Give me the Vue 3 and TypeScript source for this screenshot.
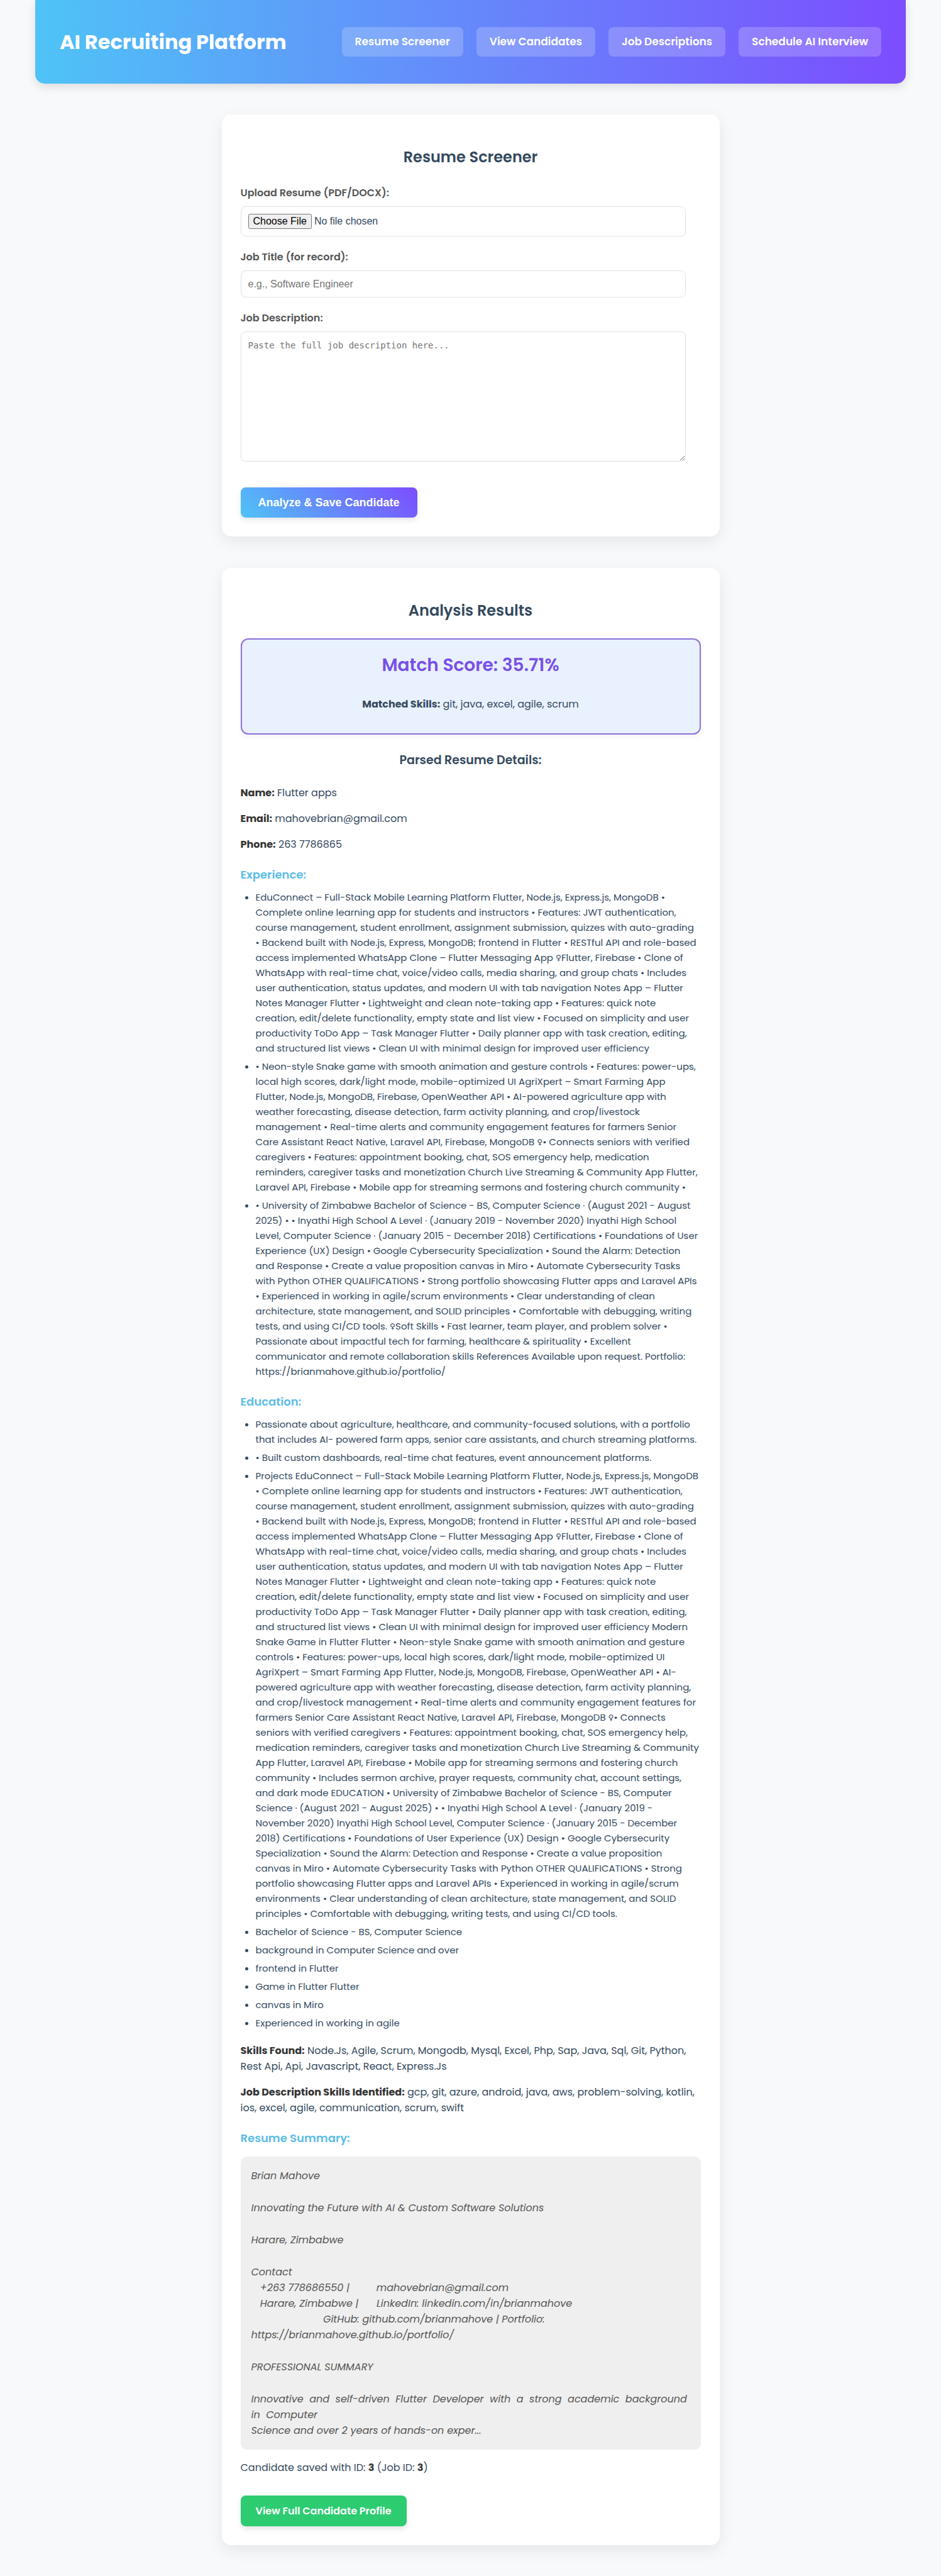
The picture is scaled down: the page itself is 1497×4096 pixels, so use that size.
<script setup lang="ts">
import { ref } from 'vue'

interface NavLink {
  label: string
  href: string
}

const navLinks: NavLink[] = [
  { label: 'Resume Screener', href: '#screener' },
  { label: 'View Candidates', href: '#candidates' },
  { label: 'Job Descriptions', href: '#jobs' },
  { label: 'Schedule AI Interview', href: '#interview' },
]

const jobTitle = ref('')
const jobDescription = ref('')

const contact = [
  { label: 'Name:', value: 'Flutter apps' },
  { label: 'Email:', value: 'mahovebrian@gmail.com' },
  { label: 'Phone:', value: '263 7786865' },
]

const experience: string[] = [
  `EduConnect – Full-Stack Mobile Learning Platform Flutter, Node.js, Express.js, MongoDB •
Complete online learning app for students and instructors • Features: JWT authentication,
course management, student enrollment, assignment submission, quizzes with auto-grading
• Backend built with Node.js, Express, MongoDB; frontend in Flutter • RESTful API and role-based
access implemented WhatsApp Clone – Flutter Messaging App ♀Flutter, Firebase • Clone of
WhatsApp with real-time chat, voice/video calls, media sharing, and group chats • Includes
user authentication, status updates, and modern UI with tab navigation Notes App – Flutter
Notes Manager Flutter • Lightweight and clean note-taking app • Features: quick note
creation, edit/delete functionality, empty state and list view • Focused on simplicity and user
productivity ToDo App – Task Manager Flutter • Daily planner app with task creation, editing,
and structured list views • Clean UI with minimal design for improved user efficiency`,
  `• Neon-style Snake game with smooth animation and gesture controls • Features: power-ups,
local high scores, dark/light mode, mobile-optimized UI AgriXpert – Smart Farming App
Flutter, Node.js, MongoDB, Firebase, OpenWeather API • AI-powered agriculture app with
weather forecasting, disease detection, farm activity planning, and crop/livestock
management • Real-time alerts and community engagement features for farmers Senior
Care Assistant React Native, Laravel API, Firebase, MongoDB ♀• Connects seniors with verified
caregivers • Features: appointment booking, chat, SOS emergency help, medication
reminders, caregiver tasks and monetization Church Live Streaming & Community App Flutter,
Laravel API, Firebase • Mobile app for streaming sermons and fostering church community •`,
  `• University of Zimbabwe Bachelor of Science - BS, Computer Science · (August 2021 - August
2025) • • Inyathi High School A Level · (January 2019 - November 2020) Inyathi High School
Level, Computer Science · (January 2015 - December 2018) Certifications • Foundations of User
Experience (UX) Design • Google Cybersecurity Specialization • Sound the Alarm: Detection
and Response • Create a value proposition canvas in Miro • Automate Cybersecurity Tasks
with Python OTHER QUALIFICATIONS • Strong portfolio showcasing Flutter apps and Laravel APIs
• Experienced in working in agile/scrum environments • Clear understanding of clean
architecture, state management, and SOLID principles • Comfortable with debugging, writing
tests, and using CI/CD tools. ♀Soft Skills • Fast learner, team player, and problem solver •
Passionate about impactful tech for farming, healthcare & spirituality • Excellent
communicator and remote collaboration skills References Available upon request. Portfolio:
https://brianmahove.github.io/portfolio/`,
]

const education: string[] = [
  `Passionate about agriculture, healthcare, and community-focused solutions, with a portfolio
that includes AI- powered farm apps, senior care assistants, and church streaming platforms.`,
  `• Built custom dashboards, real-time chat features, event announcement platforms.`,
  `Projects EduConnect – Full-Stack Mobile Learning Platform Flutter, Node.js, Express.js, MongoDB
• Complete online learning app for students and instructors • Features: JWT authentication,
course management, student enrollment, assignment submission, quizzes with auto-grading
• Backend built with Node.js, Express, MongoDB; frontend in Flutter • RESTful API and role-based
access implemented WhatsApp Clone – Flutter Messaging App ♀Flutter, Firebase • Clone of
WhatsApp with real-time chat, voice/video calls, media sharing, and group chats • Includes
user authentication, status updates, and modern UI with tab navigation Notes App – Flutter
Notes Manager Flutter • Lightweight and clean note-taking app • Features: quick note
creation, edit/delete functionality, empty state and list view • Focused on simplicity and user
productivity ToDo App – Task Manager Flutter • Daily planner app with task creation, editing,
and structured list views • Clean UI with minimal design for improved user efficiency Modern
Snake Game in Flutter Flutter • Neon-style Snake game with smooth animation and gesture
controls • Features: power-ups, local high scores, dark/light mode, mobile-optimized UI
AgriXpert – Smart Farming App Flutter, Node.js, MongoDB, Firebase, OpenWeather API • AI-
powered agriculture app with weather forecasting, disease detection, farm activity planning,
and crop/livestock management • Real-time alerts and community engagement features for
farmers Senior Care Assistant React Native, Laravel API, Firebase, MongoDB ♀• Connects
seniors with verified caregivers • Features: appointment booking, chat, SOS emergency help,
medication reminders, caregiver tasks and monetization Church Live Streaming & Community
App Flutter, Laravel API, Firebase • Mobile app for streaming sermons and fostering church
community • Includes sermon archive, prayer requests, community chat, account settings,
and dark mode EDUCATION • University of Zimbabwe Bachelor of Science - BS, Computer
Science · (August 2021 - August 2025) • • Inyathi High School A Level · (January 2019 -
November 2020) Inyathi High School Level, Computer Science · (January 2015 - December
2018) Certifications • Foundations of User Experience (UX) Design • Google Cybersecurity
Specialization • Sound the Alarm: Detection and Response • Create a value proposition
canvas in Miro • Automate Cybersecurity Tasks with Python OTHER QUALIFICATIONS • Strong
portfolio showcasing Flutter apps and Laravel APIs • Experienced in working in agile/scrum
environments • Clear understanding of clean architecture, state management, and SOLID
principles • Comfortable with debugging, writing tests, and using CI/CD tools.`,
  'Bachelor of Science - BS, Computer Science',
  'background in Computer Science and over',
  'frontend in Flutter',
  'Game in Flutter Flutter',
  'canvas in Miro',
  'Experienced in working in agile',
]

const summary: string[] = [
  'Brian Mahove',
  'Innovating the Future with AI & Custom Software Solutions',
  'Harare, Zimbabwe',
  `Contact
   +263 778686550 |         mahovebrian@gmail.com
   Harare, Zimbabwe |      LinkedIn: linkedin.com/in/brianmahove
                        GitHub: github.com/brianmahove | Portfolio:
https://brianmahove.github.io/portfolio/`,
  'PROFESSIONAL SUMMARY',
  `Innovative  and  self-driven  Flutter  Developer  with  a  strong  academic  background
in  Computer
Science and over 2 years of hands-on exper...`,
]
</script>

<template>
  <div class="page">
    <header class="site-header">
      <h1>AI Recruiting Platform</h1>
      <nav>
        <a v-for="link in navLinks" :key="link.href" :href="link.href">{{ link.label }}</a>
      </nav>
    </header>

    <main>
      <section id="screener" class="card">
        <h2>Resume Screener</h2>
        <form @submit.prevent>
          <div class="field">
            <label for="resume">Upload Resume (PDF/DOCX):</label>
            <input id="resume" class="file" type="file" accept=".pdf,.docx" />
          </div>
          <div class="field">
            <label for="job-title">Job Title (for record):</label>
            <input id="job-title" v-model="jobTitle" class="text" type="text" placeholder="e.g., Software Engineer" />
          </div>
          <div class="field">
            <label for="job-description">Job Description:</label>
            <textarea id="job-description" v-model="jobDescription" placeholder="Paste the full job description here..."></textarea>
          </div>
          <button type="submit" class="analyze">Analyze &amp; Save Candidate</button>
        </form>
      </section>

      <section class="card">
        <h2>Analysis Results</h2>
        <div class="score">
          <h3>Match Score: 35.71%</h3>
          <p><strong>Matched Skills:</strong> git, java, excel, agile, scrum</p>
        </div>

        <h3 class="details-title">Parsed Resume Details:</h3>
        <p v-for="row in contact" :key="row.label"><strong>{{ row.label }}</strong> {{ row.value }}</p>

        <h4>Experience:</h4>
        <ul>
          <li v-for="(item, i) in experience" :key="i">{{ item }}</li>
        </ul>

        <h4>Education:</h4>
        <ul>
          <li v-for="(item, i) in education" :key="i">{{ item }}</li>
        </ul>

        <p><strong>Skills Found:</strong> Node.Js, Agile, Scrum, Mongodb, Mysql, Excel, Php, Sap, Java, Sql, Git, Python,<br />Rest Api, Api, Javascript, React, Express.Js</p>
        <p><strong>Job Description Skills Identified:</strong> gcp, git, azure, android, java, aws, problem-solving, kotlin,<br />ios, excel, agile, communication, scrum, swift</p>

        <h4>Resume Summary:</h4>
        <div class="summary">
          <p v-for="(block, i) in summary" :key="i">{{ block }}</p>
        </div>

        <p>Candidate saved with ID: <strong>3</strong> (Job ID: <strong>3</strong>)</p>
        <a class="profile" href="#profile">View Full Candidate Profile</a>
      </section>
    </main>
  </div>
</template>

<style>
body {
  margin: 0;
  background: #f8f9fb;
}
</style>

<style scoped>
.page {
  font-family: Poppins, Inter, "DejaVu Sans", sans-serif;
  font-size: 16px;
  line-height: 25px;
  color: #34495e;
}

.site-header {
  box-sizing: border-box;
  width: calc(100% - 48px);
  max-width: 1385px;
  min-height: 133px;
  margin: 0 auto 49px;
  padding: 0 39px;
  display: flex;
  align-items: center;
  justify-content: space-between;
  color: #fff;
  background: linear-gradient(90deg, #4fc3f7, #7c4dff);
  border-radius: 0 0 15px 15px;
  box-shadow: 0 5px 15px rgba(0, 0, 0, 0.12);
}

h1 {
  margin: 0;
  font-size: 32px;
  line-height: 46px;
  font-weight: 700;
}

nav {
  display: flex;
  gap: 21px;
}

nav a {
  padding: 11px 21px;
  font-size: 17px;
  font-weight: 600;
  color: #fff;
  text-decoration: none;
  background: rgba(255, 255, 255, 0.2);
  border-radius: 8px;
}

main {
  max-width: 792px;
  margin: 0 auto;
  padding-bottom: 49px;
}

.card {
  padding: 30px;
  background: #fff;
  border-radius: 15px;
  box-shadow: 0 8px 25px rgba(0, 0, 0, 0.08);
  display: flow-root;
}

.card + .card {
  margin-top: 50px;
}

h2 {
  margin: 19px 0 25px;
  font-size: 24px;
  line-height: 38px;
  font-weight: 600;
  text-align: center;
}

.field {
  width: 708px;
  max-width: 100%;
  margin-bottom: 20px;
}

label {
  display: block;
  margin-bottom: 8px;
  line-height: 26px;
  font-size: 16px;
  font-weight: 600;
  color: #555;
}

input,
textarea {
  display: block;
  box-sizing: border-box;
  width: 100%;
  margin: 0;
  padding: 11px;
  border: 1px solid #dde1e4;
  border-radius: 8px;
  background: #fff;
  color: #34495e;
  font-family: "Liberation Sans", Arial, sans-serif;
  font-size: 16px;
}

.file {
  height: 48px;
}

.text {
  height: 43px;
}

textarea {
  height: 207px;
  font-family: "DejaVu Sans Mono", monospace;
  font-size: 14px;
  line-height: 20px;
  resize: vertical;
}

input::placeholder,
textarea::placeholder {
  color: #757575;
}

.analyze {
  height: 48px;
  margin-top: 21px;
  padding: 0 28px;
  border: 0;
  border-radius: 8px;
  font-family: "Liberation Sans", Arial, sans-serif;
  font-size: 18px;
  font-weight: 700;
  color: #fff;
  background: linear-gradient(45deg, #4fc3f7, #7c4dff);
  box-shadow: 0 4px 10px rgba(0, 0, 0, 0.1);
}

form {
  display: flex;
  flex-direction: column;
  align-items: flex-start;
}

.score {
  padding: 18px;
  text-align: center;
  background: #e9f1ff;
  border: 2px solid #8e6fd8;
  border-radius: 12px;
  box-shadow: 0 4px 10px rgba(0, 0, 0, 0.05);
}

.score h3 {
  margin: 0 0 26px;
  font-size: 28px;
  line-height: 46px;
  font-weight: 600;
  color: #7850e6;
}

.score strong {
  color: #34495e;
}

.details-title {
  margin: 26px 0 24px;
  font-size: 19px;
  line-height: 30px;
  font-weight: 600;
  text-align: center;
}

p {
  margin: 0 0 16px;
  white-space: pre;
}

strong {
  font-weight: 700;
  color: #333;
}

h4 {
  margin: 21px 0 10px;
  font-size: 18px;
  line-height: 29px;
  font-weight: 600;
  color: #5bbce8;
}

ul {
  margin: 0 0 19px;
  padding-left: 24px;
  font-family: Poppins, "DejaVu Sans Mono", sans-serif;
  font-size: 15px;
  line-height: 24px;
}

li {
  white-space: pre;
}

li + li {
  margin-top: 5px;
}

.summary {
  display: flex;
  flex-direction: column;
  gap: 26px;
  margin: 15px 0 16px;
  padding: 18px 17px;
  background: #efefef;
  border-radius: 10px;
  font-style: italic;
  color: #555;
}

.summary p {
  margin: 0;
}

.profile {
  display: inline-block;
  margin-top: 16px;
  padding: 12px 24px;
  font-size: 16px;
  font-weight: 600;
  color: #fff;
  text-decoration: none;
  background: #2ecc71;
  border-radius: 8px;
  box-shadow: 0 4px 8px rgba(0, 0, 0, 0.1);
}
</style>
